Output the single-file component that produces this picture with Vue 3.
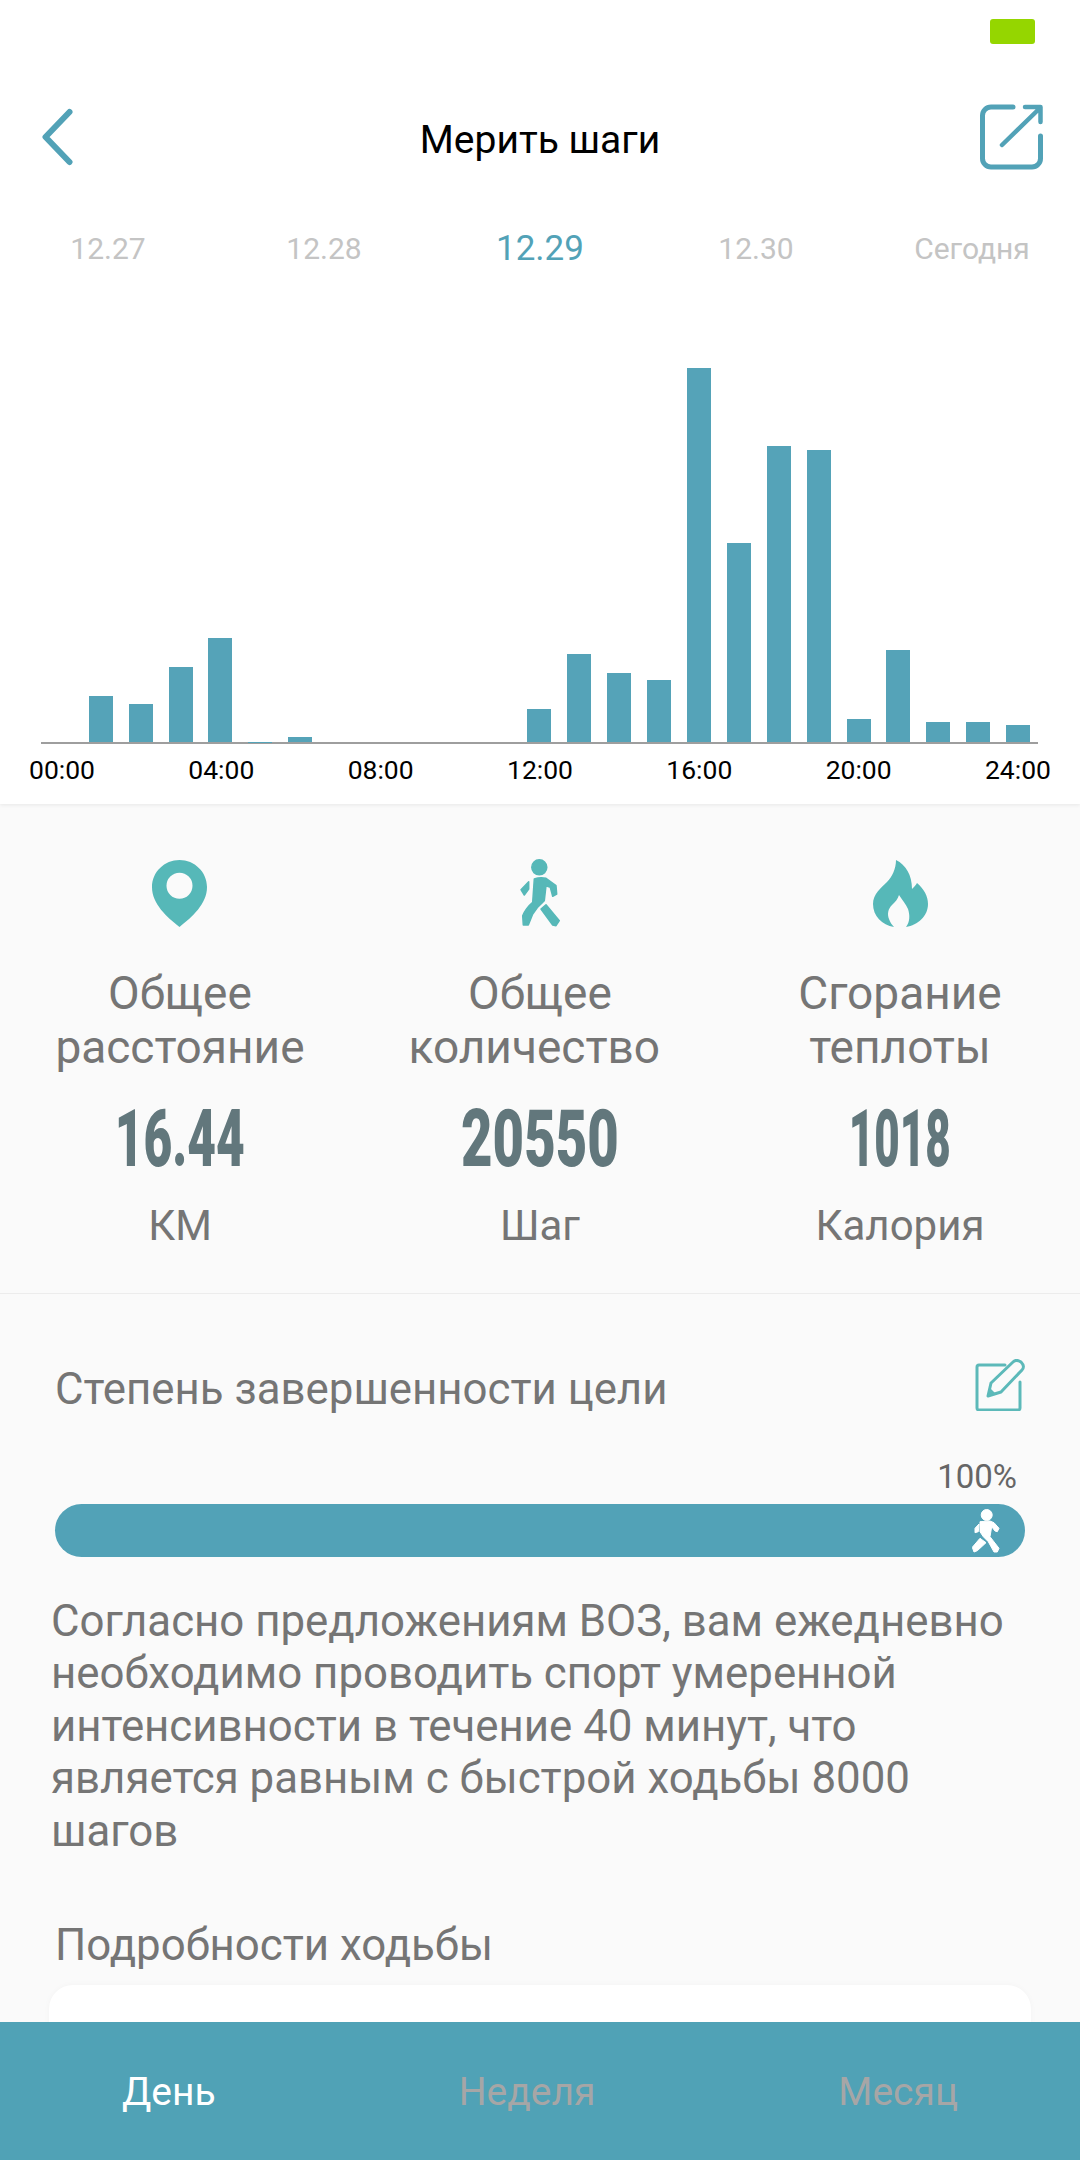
<template>
  <div class="screen">
    <div class="scroll">
      <div class="top">
        <div class="status"><span class="battery"></span></div>
        <div class="header">
          <svg class="back" viewBox="0 0 34 60" fill="none">
            <path d="M30.500 5 6.500 30l24 25" stroke="#52a2b7" stroke-width="6" stroke-linecap="round" stroke-linejoin="round" />
          </svg>
          <span class="title">Мерить шаги</span>
          <svg class="share" viewBox="0 0 66 68" fill="none">
            <path d="M35 4H13a8.500 8.500 0 0 0-8.500 8.500v43A8.500 8.500 0 0 0 13 64h41a8.500 8.500 0 0 0 8.500-8.500V33" stroke="#52a2b7" stroke-width="5" stroke-linecap="round" />
            <path d="M24 42 62 5M47 4h15.500v15" stroke="#52a2b7" stroke-width="4.500" stroke-linecap="round" stroke-linejoin="round" />
          </svg>
        </div>
        <div class="dates">
          <span v-for="d in dates" :key="d.label" class="date" :class="{ active: d.active }">{{ d.label }}</span>
        </div>
        <div class="chart">
          <div class="bars">
            <div v-for="(h, i) in bars" :key="i" class="slot">
              <div class="bar" :style="{ height: h + 'px' }"></div>
            </div>
          </div>
          <div class="hours">
            <span v-for="t in hours" :key="t" class="hour">{{ t }}</span>
          </div>
        </div>
      </div>

      <div class="stats">
        <div v-for="s in stats" :key="s.unit" class="stat">
          <svg v-if="s.icon === 'pin'" class="stat-icon" viewBox="0 0 56 68">
            <path fill="#56b8b8" fill-rule="evenodd" d="M27.500 1C12.500 1 0 13 0 28c0 17 15 30 27.500 40C40 58 55 45 55 28 55 13 42.500 1 27.500 1Zm0 12.700a13 13 0 1 1 0 26 13 13 0 0 1 0-26Z" />
          </svg>
          <svg v-else-if="s.icon === 'walk'" class="stat-icon" viewBox="0 0 40 68">
            <g fill="#56b8b8" stroke="#56b8b8" stroke-width="1.500" stroke-linejoin="round">
              <circle cx="19.300" cy="8.300" r="7.500" />
              <path d="M14.300 20Q20 18 26 19.300L36 26.700 36.700 35 32.700 37.300 30.300 28.300 26 26.700 24.300 41.700Q17 48 12.700 55L8.300 66H3.300L2.700 56.700Q6 49 12.700 43.300Z" />
              <path d="M8.700 22.700 1 30.700 4.300 36 8.700 30Z" />
              <path d="M26 45.700 39.300 61.700 36 66.700 32.700 66 21 50Z" />
            </g>
          </svg>
          <svg v-else class="stat-icon" viewBox="0 0 56 68">
            <path fill="#56b8b8" d="M24 1C34 6 40 16 40 30 42 28 44 26 45 24 52 30 56 37 56 45 56 57 46 66 34 68 38 63 38 56 36 50 34 45 30 41 27 36 26 40 23 43 20 46 16 50 15 55 17 60 18 63 20 66 22 68 10 66 1 57 1 45 1 35 9 29 15 23 20 18 24 10 24 1Z" />
          </svg>
          <div class="stat-label">{{ s.line1 }}<br />{{ s.line2 }}</div>
          <div class="stat-num"><span :style="{ transform: `scaleX(${s.squeeze})` }">{{ s.value }}</span></div>
          <div class="stat-unit">{{ s.unit }}</div>
        </div>
      </div>

      <div class="goal">
        <div class="goal-head">
          <span class="goal-title">Степень завершенности цели</span>
          <svg class="edit" viewBox="0 0 52 52" fill="none">
            <path d="M30 6H4a2 2 0 0 0-2 2v41a2 2 0 0 0 2 2h39a2 2 0 0 0 2-2V23" stroke="#5cb9b9" stroke-width="3" stroke-linecap="round" />
            <path d="M13 37l3-13L38 3c2-2 5-2 8 0 3 3 3 6 1 8L26 33Z" stroke="#5cb9b9" stroke-width="3" stroke-linejoin="round" />
            <path d="M13 37l2-8 6 6Z" fill="#5cb9b9" />
          </svg>
        </div>
        <div class="percent">100%</div>
        <div class="progress">
          <svg class="progress-walker" viewBox="0 0 28 44">
            <g fill="#fff" stroke="#fff" stroke-width="1" stroke-linejoin="round">
              <circle cx="14.700" cy="6" r="5.500" />
              <path d="M8 12.700 18 12 22 13.700 27 19.300 25.300 22.700 23 22 19.700 17.700 18 27.700 27 39.300 25.300 43H22L16.300 32.700 11.300 27.700 8 22.700Z" />
              <path d="M7 15 3 19.300V23.700L6.300 22.700Z" />
              <path d="M8 29.300 .3 38.300 2 43 5.300 41.700 14 33.700Z" />
            </g>
          </svg>
        </div>
        <p class="advice">Согласно предложениям ВОЗ, вам ежедневно необходимо проводить спорт умеренной интенсивности в течение 40 минут, что является равным с быстрой ходьбы 8000 шагов</p>
        <div class="detail-title">Подробности ходьбы</div>
        <div class="detail-card"></div>
      </div>
    </div>

    <div class="tabs">
      <span class="tab active">День</span>
      <span class="tab">Неделя</span>
      <span class="tab">Месяц</span>
    </div>
  </div>
</template>

<script setup>
const dates = [
  { label: "12.27" },
  { label: "12.28" },
  { label: "12.29", active: true },
  { label: "12.30" },
  { label: "Сегодня" },
];

// heights per hour, 00:00 to 24:00
const bars = [0, 46, 38, 75, 104, 0.5, 5, 0, 0, 0, 0, 0, 33, 88, 69, 62, 374, 199, 296, 292, 23, 92, 20, 20, 17];

const hours = ["00:00", "04:00", "08:00", "12:00", "16:00", "20:00", "24:00"];

// squeeze stands in for the condensed display font of the numbers
const stats = [
  { icon: "pin", line1: "Общее", line2: "расстояние", value: "16.44", unit: "КМ", squeeze: 0.62 },
  { icon: "walk", line1: "Общее", line2: "количество\u00a0", value: "20550", unit: "Шаг", squeeze: 0.68 },
  { icon: "fire", line1: "Сгорание", line2: "теплоты", value: "1018", unit: "Калория", squeeze: 0.55 },
];
</script>

<style>
html,
body {
  margin: 0;
  background: #fff;
}
</style>

<style scoped>
.screen {
  width: 1080px;
  height: 2160px;
  display: flex;
  flex-direction: column;
  overflow: hidden;
  font-family: Roboto, "Noto Sans", sans-serif;
}
.scroll {
  flex: 1;
  min-height: 0;
  overflow: hidden;
  background: #fafafa;
}
.top {
  height: 804px;
  background: #fff;
  box-shadow: 0 1px 4px rgba(0, 0, 0, 0.08);
  position: relative;
}
.status {
  height: 63px;
  padding-top: 19px;
  box-sizing: border-box;
  display: flex;
  justify-content: flex-end;
  padding-right: 45px;
}
.battery {
  width: 45px;
  height: 25px;
  background: #95d600;
  border-radius: 3px;
}
.header {
  height: 108px;
  display: grid;
  grid-template-columns: 1fr auto 1fr;
  align-items: center;
  padding: 0 36px;
  margin-top: 23px;
}
.back {
  width: 34px;
  height: 60px;
  margin: 0 0 6px 3px;
}
.title {
  font-size: 39px;
  color: #000;
}
.share {
  width: 66px;
  height: 68px;
  margin-bottom: 6px;
  justify-self: end;
}
.dates {
  display: grid;
  grid-template-columns: repeat(5, 216px);
  margin-top: 24px;
  height: 60px;
  align-items: center;
}
.date {
  text-align: center;
  font-size: 30px;
  color: #c4c4c4;
}
.date.active {
  font-size: 35px;
  color: #52a2b7;
}
.chart {
  margin-top: 90px;
}
.bars {
  margin: 0 42px 0 41px;
  height: 374px;
  display: grid;
  grid-template-columns: repeat(25, 1fr);
  align-items: end;
  border-bottom: 2px solid #9e9e9e;
}
.slot {
  display: flex;
  justify-content: center;
}
.bar {
  width: 24px;
  background: #55a3b8;
}
.hours {
  display: flex;
  justify-content: space-between;
  padding: 0 29px;
  margin-top: 10px;
}
.hour {
  font-size: 26.500px;
  line-height: 32px;
  color: #000;
}
.stats {
  height: 490px;
  box-sizing: border-box;
  padding-top: 55px;
  display: grid;
  grid-template-columns: 360px 360px 360px;
  border-bottom: 1px solid #ececec;
}
.stat {
  display: flex;
  flex-direction: column;
  align-items: center;
  text-align: center;
  color: #757575;
}
.stat-icon {
  height: 68px;
  width: 56px;
}
.stat-label {
  margin-top: 39px;
  font-size: 46px;
  line-height: 54px;
}
.stat-num {
  margin-top: 25px;
  height: 80px;
  font-size: 80px;
  line-height: 80px;
  font-weight: 900;
  color: #62777c;
}
.stat-num span {
  display: inline-block;
}
.stat-unit {
  margin-top: 22px;
  font-size: 42px;
  line-height: 50px;
}
.goal {
  padding: 0 55px;
}
.goal-head {
  display: flex;
  justify-content: space-between;
  align-items: center;
  height: 52px;
  margin-top: 68px;
}
.goal-title {
  font-size: 43.800px;
  color: #757575;
  padding-top: 2px;
}
.edit {
  width: 52px;
  height: 52px;
  margin: 0 -2px 6px 0;
}
.percent {
  margin-top: 43px;
  text-align: right;
  padding-right: 8px;
  font-size: 33px;
  line-height: 40px;
  color: #666;
}
.progress {
  margin-top: 7px;
  height: 53px;
  border-radius: 27px;
  background: #52a2b7;
  display: flex;
  justify-content: flex-end;
  align-items: center;
  padding-right: 25px;
}
.progress-walker {
  width: 28px;
  height: 44px;
}
.advice {
  margin: 38px 0 0 -4px;
  font-size: 43.800px;
  line-height: 52.400px;
  color: #757575;
}
.detail-title {
  margin-top: 63px;
  font-size: 43.800px;
  line-height: 50px;
  color: #757575;
}
.detail-card {
  margin: 15px -6px 0 -6px;
  height: 200px;
  border-radius: 24px;
  background: #fff;
  box-shadow: 0 0 6px rgba(0, 0, 0, 0.03);
}
.tabs {
  height: 138px;
  box-sizing: border-box;
  flex-shrink: 0;
  background: #50a2b6;
  display: flex;
  justify-content: space-between;
  align-items: center;
  padding: 2px 122px 0;
  position: relative;
}
.tab {
  font-size: 39px;
  color: #a6a6a6;
}
.tab.active {
  color: #fff;
}
</style>
